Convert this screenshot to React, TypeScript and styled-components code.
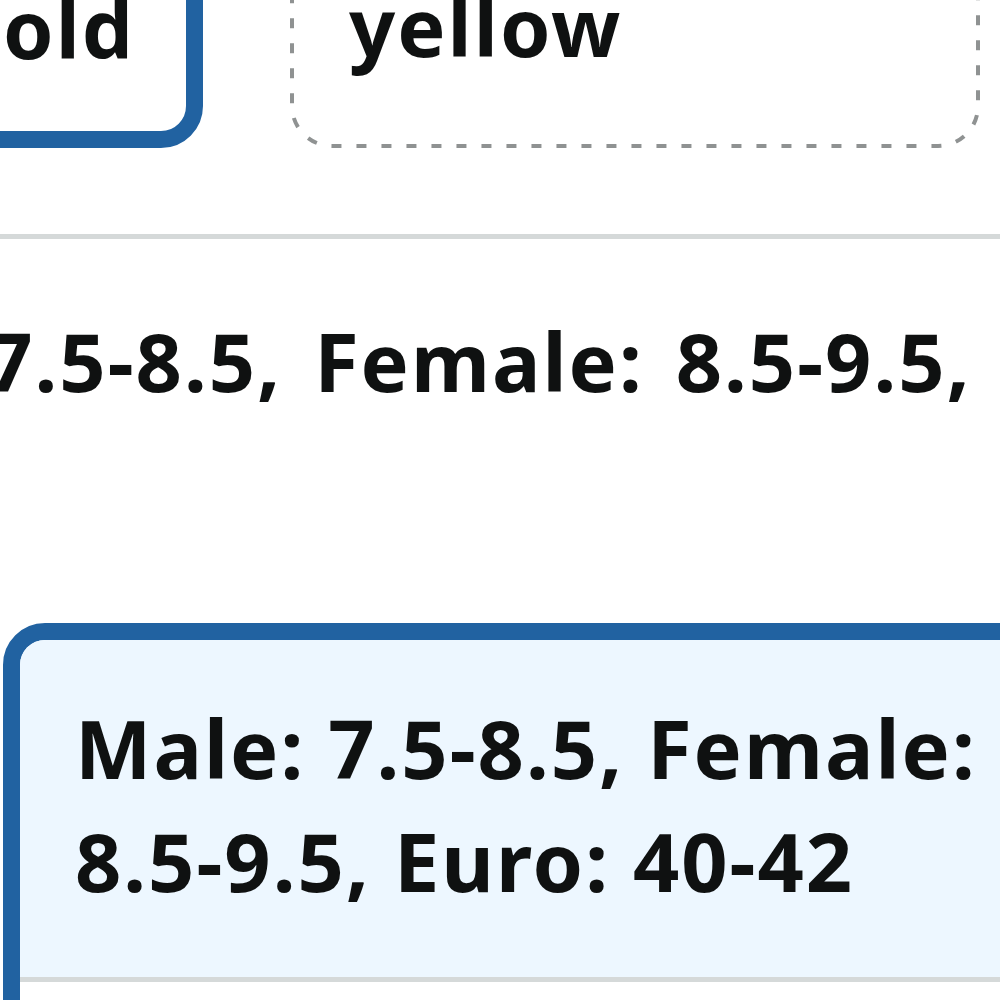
import React from "react";
import styled, { createGlobalStyle } from "styled-components";

const Global = createGlobalStyle`
  html, body {
    margin: 0;
    padding: 0;
    background: #ffffff;
  }
  body {
    font-family: "Noto Sans", "Open Sans", Arial, sans-serif;
    color: #0f1111;
  }
`;

const Page = styled.div`
  width: 1000px;
  height: 1000px;
  overflow: hidden;
  background: #ffffff;
  font-size: 81px;
  font-weight: 700;
  line-height: 113px;
  letter-spacing: 2px;
`;

const SwatchRow = styled.div`
  display: flex;
  justify-content: flex-end;
  gap: 87px;
  width: 1200px;
  margin: -58px 0 0 -220px;
`;

const Swatch = styled.div<{ $selected?: boolean; $width?: number }>`
  position: relative;
  box-sizing: border-box;
  flex: none;
  width: ${(p) => (p.$width ? `${p.$width}px` : "auto")};
  border-radius: 42px;
  padding: ${(p) => (p.$selected ? "12px 51px 47px 55px" : "27px 55px 58px 59px")};
  white-space: nowrap;
  border: ${(p) => (p.$selected ? "17px solid #2162a1" : "none")};
`;

const DashedOutline = styled.svg`
  position: absolute;
  inset: 0;
  width: 100%;
  height: 100%;
  overflow: visible;
  pointer-events: none;
`;

const Divider = styled.hr`
  margin: 86px 0 0;
  border: none;
  height: 5px;
  background: #d5d9d9;
`;

const Label = styled.div`
  margin: 65px 0 0 -276px;
  white-space: nowrap;
  word-spacing: 9px;
`;

const Tile = styled.div`
  box-sizing: border-box;
  width: 1250px;
  margin: 206px 0 0 3px;
  border: 17px solid #2162a1;
  border-radius: 42px;
  overflow: hidden;
  background: #ffffff;
`;

const TileTop = styled.div`
  background: #edf7ff;
  padding: 51px 240px 60px 55px;
  border-bottom: 5px solid #d5d9d9;
`;

const TileBottom = styled.div`
  height: 120px;
  background: #ffffff;
`;

function Dashed() {
  return (
    <DashedOutline>
      <rect
        x="2"
        y="2"
        width="calc(100% - 4px)"
        height="calc(100% - 4px)"
        rx="40"
        ry="40"
        fill="none"
        stroke="#8f9292"
        strokeWidth="4"
        strokeDasharray="10 15"
      />
    </DashedOutline>
  );
}

export default function App() {
  return (
    <>
      <Global />
      <Page>
        <SwatchRow>
          <Swatch $selected>gold</Swatch>
          <Swatch $width={690}>
            yellow
            <Dashed />
          </Swatch>
        </SwatchRow>
        <Divider />
        <Label>Male: 7.5-8.5, Female: 8.5-9.5, Euro: 40-42</Label>
        <Tile>
          <TileTop>Male: 7.5-8.5, Female: 8.5-9.5, Euro: 40-42</TileTop>
          <TileBottom />
        </Tile>
      </Page>
    </>
  );
}
